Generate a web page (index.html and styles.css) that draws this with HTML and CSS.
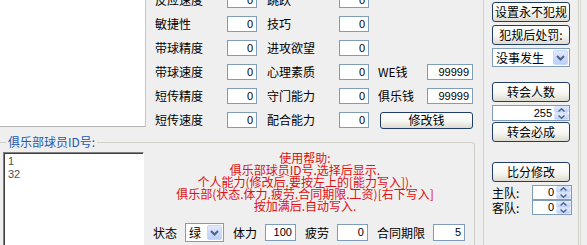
FILE: index.html
```html
<!DOCTYPE html>
<html>
<head>
<meta charset="utf-8">
<link rel="stylesheet" href="styles.css">
</head>
<body>
<div class="app">
  <div class="main">
    <div class="top">
      <div class="toplist"></div>
      <div class="stats">
        <span class="lbl">反应速度</span><span class="cell"><span class="num">0</span></span>
        <span class="lbl">跳跃</span><span class="cell"><span class="num">0</span></span>
        <span></span><span></span>

        <span class="lbl">敏捷性</span><span class="cell"><span class="num">0</span></span>
        <span class="lbl">技巧</span><span class="cell"><span class="num">0</span></span>
        <span></span><span></span>

        <span class="lbl">带球精度</span><span class="cell"><span class="num">0</span></span>
        <span class="lbl">进攻欲望</span><span class="cell"><span class="num">0</span></span>
        <span></span><span></span>

        <span class="lbl">带球速度</span><span class="cell"><span class="num">0</span></span>
        <span class="lbl">心理素质</span><span class="cell"><span class="num">0</span></span>
        <span class="lbl">WE钱</span><span class="cell"><span class="num wide">99999</span></span>

        <span class="lbl">短传精度</span><span class="cell"><span class="num">0</span></span>
        <span class="lbl">守门能力</span><span class="cell"><span class="num">0</span></span>
        <span class="lbl">俱乐钱</span><span class="cell"><span class="num wide">99999</span></span>

        <span class="lbl">短传速度</span><span class="cell"><span class="num">0</span></span>
        <span class="lbl">配合能力</span><span class="cell"><span class="num">0</span></span>
        <span class="span2"><button class="btn money">修改钱</button></span>
      </div>
    </div>
    <fieldset class="group">
      <legend>俱乐部球员ID号:</legend>
      <div class="groupbody">
        <div class="idlist"><div>1</div><div>32</div></div>
        <div class="helpcol">
          <div class="help">
            <div>使用帮助:</div>
            <div>俱乐部球员ID号.选择后显示.</div>
            <div>个人能力(修改后.要按左上的[能力写入]).</div>
            <div>俱乐部(状态.体力.疲劳.合同期限.工资)[右下写入]</div>
            <div>按加满后.自动写入.</div>
          </div>
          <div class="bottomrow">
            <span class="blbl">状态</span>
            <span class="combo small"><span class="cval">绿</span><span class="drop"><svg width="9" height="6" viewBox="0 0 9 6"><polyline points="1,1 4.5,4.5 8,1" fill="none" stroke="#4d6185" stroke-width="2"/></svg></span></span>
            <span class="blbl">体力</span>
            <span class="num bnum">100</span>
            <span class="blbl">疲劳</span>
            <span class="num bnum">0</span>
            <span class="blbl">合同期限</span>
            <span class="num bnum last">5</span>
          </div>
        </div>
      </div>
    </fieldset>
  </div>
  <div class="side">
    <div class="sidegroup">
      <button class="btn sbtn gap3">设置永不犯规</button>
      <button class="btn sbtn gap3">犯规后处罚:</button>
      <span class="combo big"><span class="cval">没事发生</span><span class="drop"><svg width="9" height="6" viewBox="0 0 9 6"><polyline points="1,1 4.5,4.5 8,1" fill="none" stroke="#4d6185" stroke-width="2"/></svg></span></span>
      <button class="btn sbtn gap3">转会人数</button>
      <span class="spin s255"><span class="sval">255</span><span class="arrows"><span class="ar"><svg width="7" height="4" viewBox="0 0 7 4"><polyline points="0.5,3.5 3.5,0.8 6.5,3.5" fill="none" stroke="#4d6185" stroke-width="1.4"/></svg></span><span class="ar"><svg width="7" height="4" viewBox="0 0 7 4"><polyline points="0.5,0.5 3.5,3.2 6.5,0.5" fill="none" stroke="#4d6185" stroke-width="1.4"/></svg></span></span></span>
      <button class="btn sbtn gap20">转会必成</button>
      <button class="btn sbtn gap3">比分修改</button>
      <div class="score">
        <span class="slbl">主队:</span>
        <span class="spin sc"><span class="sval">0</span><span class="arrows"><span class="ar"><svg width="7" height="4" viewBox="0 0 7 4"><polyline points="0.5,3.5 3.5,0.8 6.5,3.5" fill="none" stroke="#4d6185" stroke-width="1.4"/></svg></span><span class="ar"><svg width="7" height="4" viewBox="0 0 7 4"><polyline points="0.5,0.5 3.5,3.2 6.5,0.5" fill="none" stroke="#4d6185" stroke-width="1.4"/></svg></span></span></span>
      </div>
      <div class="score">
        <span class="slbl">客队:</span>
        <span class="spin sc"><span class="sval">0</span><span class="arrows"><span class="ar"><svg width="7" height="4" viewBox="0 0 7 4"><polyline points="0.5,3.5 3.5,0.8 6.5,3.5" fill="none" stroke="#4d6185" stroke-width="1.4"/></svg></span><span class="ar"><svg width="7" height="4" viewBox="0 0 7 4"><polyline points="0.5,0.5 3.5,3.2 6.5,0.5" fill="none" stroke="#4d6185" stroke-width="1.4"/></svg></span></span></span>
      </div>
    </div>
    <div class="edge"></div>
  </div>
</div>
</body>
</html>
```

FILE: styles.css
```css
html, body {
  margin: 0;
  padding: 0;
  background: #efefef;
  overflow: hidden;
}
body {
  width: 587px;
  height: 245px;
  font-family: "Noto Sans CJK SC", "Noto Sans", sans-serif;
  font-size: 12px;
  line-height: 14px;
  color: #000;
}
.app {
  display: flex;
  height: 245px;
}
.main {
  width: 480px;
  display: flex;
  flex-direction: column;
}
.top {
  display: flex;
  align-items: flex-start;
}
.toplist {
  width: 145px;
  height: 126px;
  background: #fff;
  border-right: 1px solid #c8c8c8;
  border-bottom: 1px solid #b4b4b4;
}
.stats {
  margin-top: -12px;
  margin-left: 9px;
  display: grid;
  grid-template-columns: 72px 40px 72px 39px 49px 46px;
  grid-auto-rows: 24px;
  align-items: center;
}
.lbl {
  white-space: nowrap;
}
.cell {
  display: flex;
  align-items: center;
}
.num {
  box-sizing: border-box;
  display: inline-block;
  width: 30px;
  height: 16px;
  border: 1px solid #7f9db9;
  background: #fff;
  text-align: right;
  padding-right: 3px;
  font-family: "Liberation Sans", Arial, sans-serif;
  font-size: 11px;
  line-height: 14px;
}
.num.wide {
  width: 46px;
}
.span2 {
  grid-column: span 2;
  display: flex;
}
.btn {
  box-sizing: border-box;
  margin: 0;
  padding: 0;
  border: 1px solid #203c68;
  border-radius: 3px;
  background: linear-gradient(#ffffff, #f6f6f2 55%, #dedbd0);
  font-family: "Noto Sans CJK SC", sans-serif;
  font-size: 12px;
  line-height: 16px;
  color: #000;
  text-align: center;
  white-space: nowrap;
}
.money {
  margin-left: 2px;
  width: 94px;
  height: 17px;
  line-height: 14px;
}
.group {
  margin: 3px 0 0 0;
  padding: 3px 0 0 0;
  width: 475px;
  box-sizing: border-box;
  border: 1px solid #d0d0c8;
  border-left: none;
  border-bottom: none;
  border-top-right-radius: 4px;
  min-width: 0;
  flex: 1;
}
.group legend {
  margin-left: 6px;
  padding: 0 2px;
  font-size: 12px;
  line-height: 14px;
  color: #2458b0;
}
.groupbody {
  display: flex;
  align-items: flex-start;
}
.idlist {
  margin-left: 3px;
  width: 143px;
  height: 100px;
  box-sizing: border-box;
  background: #fff;
  border-top: 1px solid #808080;
  border-left: 1px solid #808080;
  border-right: 1px solid #fff;
  border-bottom: 1px solid #fff;
  box-shadow: inset 1px 1px 0 #404040;
  padding: 2px 4px;
  font-family: "Liberation Sans", Arial, sans-serif;
  font-size: 11px;
  line-height: 13px;
  color: #505050;
}
.helpcol {
  flex: 1;
  padding-left: 9px;
  display: flex;
  flex-direction: column;
}
.help {
  margin-right: 17px;
  text-align: center;
  color: #dd1111;
  font-size: 12px;
  line-height: 12px;
  white-space: nowrap;
}
.bottomrow {
  margin-top: 11px;
  display: flex;
  align-items: center;
  height: 19px;
}
.blbl {
  margin-right: 8px;
  white-space: nowrap;
}
.bnum {
  width: 31px;
  height: 17px;
  line-height: 15px;
  margin-right: 9px;
}
.bnum.last {
  width: 32px;
}
.combo {
  box-sizing: border-box;
  display: flex;
  align-items: stretch;
  border: 1px solid #7f9db9;
  background: #fff;
  padding: 1px;
}
.combo .cval {
  flex: 1;
  padding-left: 2px;
  line-height: 15px;
}
.combo .drop {
  width: 15px;
  border-radius: 2px;
  background: linear-gradient(#e0e9fd, #bccffa);
  border: 1px solid #c9d8fc;
  box-sizing: border-box;
  display: flex;
  align-items: center;
  justify-content: center;
}
.combo.small {
  width: 39px;
  height: 19px;
  margin-right: 9px;
}
.combo.big {
  width: 78px;
  height: 19px;
  margin-bottom: 15px;
}
.side {
  display: flex;
  margin-left: 3px;
}
.sidegroup {
  width: 96px;
  box-sizing: border-box;
  border-left: 1px solid #d0d0c8;
  border-right: 1px solid #d0d0c8;
  padding: 2px 0 0 8px;
  display: flex;
  flex-direction: column;
  align-items: flex-start;
}
.edge {
  width: 1px;
  margin-left: 1px;
  background: #d8d8d0;
}
.sbtn {
  width: 78px;
  height: 20px;
}
.gap3 {
  margin-bottom: 3px;
}
.gap20 {
  margin-bottom: 20px;
}
.spin {
  box-sizing: border-box;
  display: flex;
  border: 1px solid #7f9db9;
  background: #fff;
}
.spin .sval {
  flex: 1;
  text-align: right;
  padding-right: 2px;
  font-family: "Liberation Sans", Arial, sans-serif;
  font-size: 11px;
  line-height: 14px;
}
.arrows {
  width: 15px;
  display: flex;
  flex-direction: column;
}
.ar {
  flex: 1;
  display: flex;
  align-items: center;
  justify-content: center;
  background: linear-gradient(#e2eafd, #bccffa);
  border: 1px solid #d6e1fc;
  border-radius: 2px;
}
.s255 {
  width: 78px;
  height: 16px;
  margin-bottom: 1px;
}
.score {
  display: flex;
  align-items: center;
  height: 15px;
}
.slbl {
  width: 40px;
  white-space: nowrap;
}
.sc {
  width: 40px;
  height: 15px;
}
.sc .sval {
  line-height: 13px;
}
```
